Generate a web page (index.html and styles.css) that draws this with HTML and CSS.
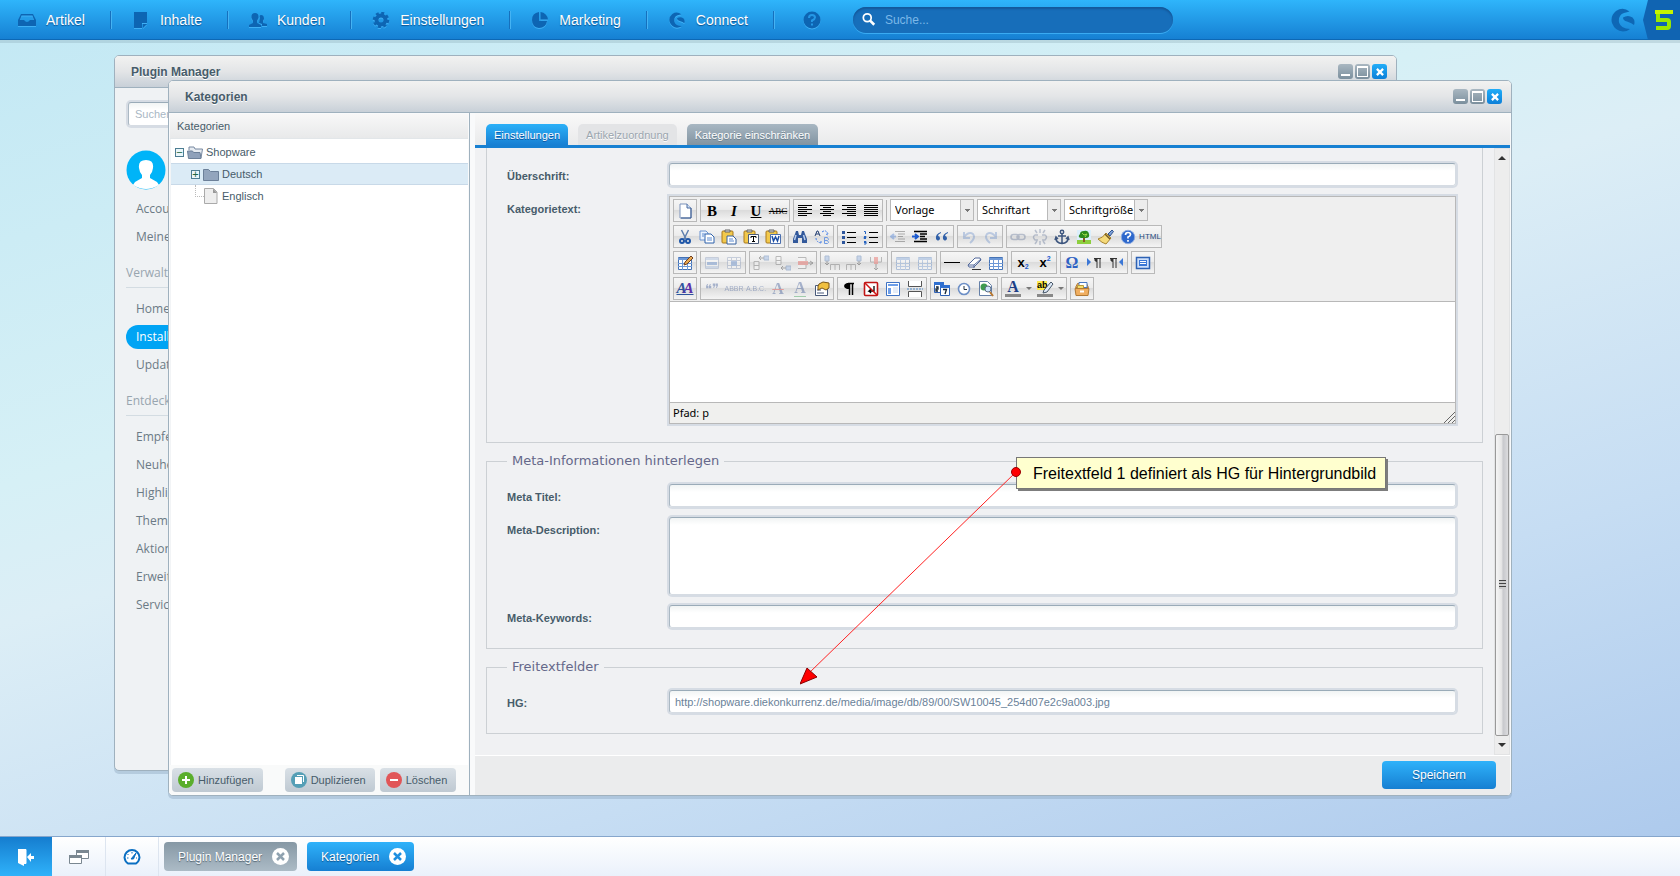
FILE: index.html
```html
<!DOCTYPE html>
<html lang="de">
<head>
<meta charset="utf-8">
<title>Kategorien</title>
<link rel="stylesheet" href="styles.css">
</head>
<body>
<svg class="sprite" aria-hidden="true">
  <symbol id="new" viewBox="0 0 16 16"><path d="M3 1h7l4 4v10H3z" fill="#fff" stroke="#7c93bb"/><path d="M10 1v4h4" fill="#cfe0f5" stroke="#4a6ba0"/><path d="M14 5v10H4" fill="none" stroke="#36598f"/></symbol>
  <symbol id="al" viewBox="0 0 16 16"><path d="M1 2.500h14M1 4.500h9M1 6.500h14M1 8.500h9M1 10.500h14M1 12.500h9" stroke="#000"/></symbol>
  <symbol id="ac" viewBox="0 0 16 16"><path d="M1 2.500h14M4 4.500h8M1 6.500h14M4 8.500h8M1 10.500h14M4 12.500h8" stroke="#000"/></symbol>
  <symbol id="ar" viewBox="0 0 16 16"><path d="M1 2.500h14M6 4.500h9M1 6.500h14M6 8.500h9M1 10.500h14M6 12.500h9" stroke="#000"/></symbol>
  <symbol id="aj" viewBox="0 0 16 16"><path d="M1 2.500h14M1 4.500h14M1 6.500h14M1 8.500h14M1 10.500h14M1 12.500h14" stroke="#000"/></symbol>
  <symbol id="cut" viewBox="0 0 16 16"><path d="M4.500 1L9 10M11.500 1L7 10" stroke="#5e7fae" stroke-width="1.500"/><circle cx="5" cy="12" r="2" fill="none" stroke="#1e56a8" stroke-width="2"/><circle cx="11" cy="12" r="2" fill="none" stroke="#1e56a8" stroke-width="2"/></symbol>
  <symbol id="copy" viewBox="0 0 16 16"><path d="M1 2h6l2 2v7H1z" fill="#eaf2fd" stroke="#6b93d0"/><path d="M6 5h6l3 3v6H6z" fill="#fff" stroke="#2f62ac"/><path d="M3 5h3M3 7h2M8 9h5M8 11h5" stroke="#5d8bd0"/></symbol>
  <symbol id="clip" viewBox="0 0 16 16"><rect x="1" y="2" width="11" height="12" rx="1" fill="#f2c94c" stroke="#a9791c"/><path d="M4 3V1h5v2z" fill="#ddd" stroke="#666"/></symbol>
  <symbol id="paste" viewBox="0 0 16 16"><use href="#clip"/><path d="M6 7h6l3 3v5H6z" fill="#fff" stroke="#35609f"/><path d="M8 10h4M8 12h5" stroke="#5d8bd0"/></symbol>
  <symbol id="pastet" viewBox="0 0 16 16"><use href="#clip"/><path d="M5.500 5.500h10v9h-10z" fill="#fff" stroke="#4b5c79"/><path d="M8 9V7.500h5V9M10.500 7.500v5M9 12.500h3" fill="none" stroke="#000"/></symbol>
  <symbol id="pastew" viewBox="0 0 16 16"><use href="#clip"/><path d="M5.500 5.500h10v9h-10z" fill="#fff" stroke="#4b6fae"/><path d="M7 7l1.500 5L10.500 8l2 4L14 7" fill="none" stroke="#1d4fa5" stroke-width="1.500"/></symbol>
  <symbol id="find" viewBox="0 0 16 16"><path d="M4 2h2l1 4h2l1-4h2l1 3 2 5v4h-5V9H6v5H1v-4l2-5z" fill="#33599b"/><path d="M4 6l-1.500 5M11.500 6l1.500 5" stroke="#b9cdec" stroke-width="1.500"/></symbol>
  <symbol id="repl" viewBox="0 0 16 16"><path d="M1 7l2-5h1l2 5M2 5h3" fill="none" stroke="#243f72"/><path d="M10.500 8.500v6h3l1-1-1-2 1-1-1-2zM11 11.500h2" fill="none" stroke="#6f9ae2"/><path d="M8 3q4-3 6 2M2 9q0 4 5 5M12 5l2 1M7 12v3" fill="none" stroke="#4a82e8" stroke-dasharray="2 1"/></symbol>
  <symbol id="ul" viewBox="0 0 16 16"><path d="M6 3.500h9M6 8.500h9M6 13.500h9" stroke="#000"/><path d="M1 2h3v3H1zM1 7h3v3H1zM1 12h3v3H1z" fill="#2c559c"/></symbol>
  <symbol id="ol" viewBox="0 0 16 16"><path d="M6 3.500h9M6 8.500h9M6 13.500h9" stroke="#000"/><path d="M1 2.500h1.500V5M1 7.500h2v1H1v1h2M1 12.500h2v2.500H1M1 13.500h2" fill="none" stroke="#2462c0"/></symbol>
  <symbol id="outd" viewBox="0 0 16 16"><path d="M5 2.500h10M8 5h7M8 7.500h5M8 10h7M5 12.500h10" stroke="#333"/><path d="M6 7.500H1M4 5L1 7.500 4 10" stroke="#2c6bd4" fill="none" stroke-width="2"/></symbol>
  <symbol id="ind" viewBox="0 0 16 16"><path d="M2 2.500h13M8 5h7M8 7.500h5M8 10h7M2 12.500h13" stroke="#000" stroke-width="1.500"/><path d="M0 7.500h5M3 5l3 2.500L3 10" stroke="#1c5bd0" fill="none" stroke-width="2"/></symbol>
  <symbol id="quo" viewBox="0 0 16 16"><path d="M7 3Q1 5 2 10q2 3 4 0 0-3-2-3 0-2 3-3zM14 3Q8 5 9 10q2 3 4 0 0-3-2-3 0-2 3-3z" fill="#2f5fa8"/></symbol>
  <symbol id="undo" viewBox="0 0 16 16"><path d="M3 3v6h6M3 8q5-6 9-3 3 4-3 9" fill="none" stroke="#5d86c8" stroke-width="2"/></symbol>
  <symbol id="redo" viewBox="0 0 16 16"><path d="M13 3v6H7M13 8Q8 2 4 5q-3 4 3 9" fill="none" stroke="#5d86c8" stroke-width="2"/></symbol>
  <symbol id="link" viewBox="0 0 16 16"><rect x="1" y="5.500" width="8" height="5" rx="2.500" fill="none" stroke="#54688f" stroke-width="1.500"/><rect x="7" y="5.500" width="8" height="5" rx="2.500" fill="none" stroke="#54688f" stroke-width="1.500"/></symbol>
  <symbol id="unlink" viewBox="0 0 16 16"><path d="M6 6H3q-3 2 0 5h3M10 6h3q3 2 0 5h-3M8 0v4M3 1l2 3M13 1l-2 3M8 16v-4M3 15l2-3M13 15l-2-3" fill="none" stroke="#54688f" stroke-width="1.500"/></symbol>
  <symbol id="anch" viewBox="0 0 16 16"><circle cx="8" cy="3" r="1.700" fill="none" stroke="#3d567f" stroke-width="1.500"/><path d="M8 5v9M4 7h8M2 9q0 5 6 5.500Q14 14 14 9M1 11l1-3 2 2M15 11l-1-3-2 2" fill="none" stroke="#3d567f" stroke-width="1.500"/></symbol>
  <symbol id="img" viewBox="0 0 16 16"><path d="M1 1h14v14H1z" fill="#dbeefb"/><path d="M1 11h14v4H1z" fill="#8dcf3f"/><path d="M7 8h2v5H7z" fill="#8a5a22"/><path d="M8 2q4-1 5 3 1 4-3 4H5Q1 8 4 5q0-3 4-3z" fill="#2d8b1f"/><path d="M6 4l2 2 3-1-2 3" stroke="#9fdb4c" fill="none"/></symbol>
  <symbol id="clean" viewBox="0 0 16 16"><path d="M10 5l4-4 1.500 1.500L12 7z" fill="#7da0d8" stroke="#31548f"/><path d="M8 4l5 5-5 6q-4-1-8-5 5-1 8-6z" fill="#f5da7a" stroke="#a8842f"/><path d="M7 5l5 5" stroke="#755a21" stroke-width="1.500"/></symbol>
  <symbol id="help" viewBox="0 0 16 16"><circle cx="8" cy="8" r="6.700" fill="#2e68cc" stroke="#8aa9e0"/><path d="M5.500 6q0-2.500 2.500-2.500t2.500 2Q10.500 7 8 8v1.500M8 11v1.800" fill="none" stroke="#fff" stroke-width="1.700"/></symbol>
  <symbol id="tbl" viewBox="0 0 16 16"><path d="M1.500 2.500h13v12h-13z" fill="#fff" stroke="#4572b4"/><path d="M1 3h14v2H1z" fill="#6c98d7"/><path d="M1 8.500h14M1 11.500h14M5.500 5v10M10.500 5v10" stroke="#6c98d7"/></symbol>
  <symbol id="tbled" viewBox="0 0 16 16"><use href="#tbl"/><path d="M7 10l1-3 6-6 2 2-6 6z" fill="#e8a850" stroke="#704020"/></symbol>
  <symbol id="trow" viewBox="0 0 16 16"><path d="M1.500 2.500h13v11h-13z" fill="#fff" stroke="#7b8fb4"/><path d="M2 4h12M2 12h12" stroke="#7b9fd4" stroke-width="1.500"/><path d="M3 7h10v3H3z" fill="#497dcc"/></symbol>
  <symbol id="tcell" viewBox="0 0 16 16"><path d="M1.500 2.500h13v11h-13zM5.500 2v12M10.500 2v12M1 5.500h14M1 10.500h14" fill="#fff" stroke="#7b8fb4"/><path d="M5 6h6v5H5z" fill="#497dcc"/></symbol>
  <symbol id="rbef" viewBox="0 0 16 16"><path d="M1 6.500h5v8H1zM1 10.500h5" fill="#fff" stroke="#555"/><path d="M11 1h5v4h-5z" fill="#7ea5df" stroke="#35609f"/><path d="M11 3H6l2-2M6 3l2 2" fill="none" stroke="#222"/></symbol>
  <symbol id="raft" viewBox="0 0 16 16"><path d="M1 1.500h5v8H1zM1 5.500h5" fill="#fff" stroke="#555"/><path d="M11 11h5v4h-5z" fill="#7ea5df" stroke="#35609f"/><path d="M11 13H6l2-2M6 13l2 2" fill="none" stroke="#222"/></symbol>
  <symbol id="rdel" viewBox="0 0 16 16"><path d="M1 2.500h8v11H1" fill="#fff" stroke="#555"/><path d="M1 6h10v4H1z" fill="#e8433a"/><path d="M11 8h5M13 6l3 2-3 2" fill="none" stroke="#222"/></symbol>
  <symbol id="cbef" viewBox="0 0 16 16"><path d="M6.500 15V9.500h9V15M11 9.500V15" fill="none" stroke="#555"/><path d="M1 1h4v5H1z" fill="#7ea5df" stroke="#35609f"/><path d="M3 6v4M1 8l2 2 2-2" fill="none" stroke="#222"/></symbol>
  <symbol id="caft" viewBox="0 0 16 16"><path d="M.500 15V9.500h9V15M5 9.500V15" fill="none" stroke="#555"/><path d="M11 1h4v5h-4z" fill="#7ea5df" stroke="#35609f"/><path d="M13 6v4M11 8l2 2 2-2" fill="none" stroke="#222"/></symbol>
  <symbol id="cdel" viewBox="0 0 16 16"><path d="M2.500 2v5h11V2" fill="none" stroke="#555"/><path d="M6 2h4v7H6z" fill="#e8433a"/><path d="M8 9v6M6 13l2 2 2-2" fill="none" stroke="#222"/></symbol>
  <symbol id="hr" viewBox="0 0 16 16"><path d="M0 7.500h16" stroke="#000"/></symbol>
  <symbol id="eras" viewBox="0 0 16 16"><path d="M2 10l7-7h5l1 2-7 7H3z" fill="#fff" stroke="#52699b"/><path d="M2 10h6l7-6M8 10v3" fill="none" stroke="#52699b"/><path d="M6 14.500h9" stroke="#333"/></symbol>
  <symbol id="ltr" viewBox="0 0 16 16"><path d="M1 3v8l4-4z" fill="#3b77d6"/><path d="M11 13V3M14 13V3M8 3.500h7" stroke="#333"/><path d="M11 3H9q-2 3 2 4z" fill="#333"/></symbol>
  <symbol id="rtl" viewBox="0 0 16 16"><path d="M15 3v8l-4-4z" fill="#3b77d6"/><path d="M5 13V3M8 13V3M2 3.500h7" stroke="#333"/><path d="M5 3H3Q1 6 5 7z" fill="#333"/></symbol>
  <symbol id="full" viewBox="0 0 16 16"><path d="M1.500 2.500h13v11h-13z" fill="#cfe1fb" stroke="#2d62b4" stroke-width="1.500"/><path d="M4 5h8v6H4z" fill="#3b77d6"/><path d="M5 6.500h6M5 8.500h6" stroke="#fff"/></symbol>
  <symbol id="props" viewBox="0 0 16 16"><path d="M1.500 4.500h12v10h-12z" fill="#fff" stroke="#48597a"/><path d="M3 9h4M3 12h7" stroke="#48597a"/><path d="M5 3l4-2 6 1v5l-3 2-4-2-4 2V5z" fill="#f0c040" stroke="#7a5718"/></symbol>
  <symbol id="pil" viewBox="0 0 16 16"><path d="M13 2.500H7M8.500 2v12M11.500 2v12" stroke="#000" stroke-width="1.500"/><path d="M9 2H6Q3 3 3 5t3 3h3z"/></symbol>
  <symbol id="nbr" viewBox="0 0 16 16"><rect x="1.500" y="1.500" width="13" height="13" rx="1" fill="#fff" stroke="#c01515" stroke-width="1.600"/><path d="M11 5v5H6l2-2M6 10l2 2" fill="none" stroke="#000" stroke-width="1.300"/><path d="M2 2l12 12" stroke="#d01515" stroke-width="1.500"/></symbol>
  <symbol id="tpl" viewBox="0 0 16 16"><path d="M1.500 1.500h13v13h-13z" fill="#fff" stroke="#3f73c4"/><path d="M3 3h10v2H3zM3 7h3v6H3z" fill="#6d9ee8"/><path d="M8 7h5M8 9h5M8 11h5" stroke="#c8d8f0"/></symbol>
  <symbol id="pb" viewBox="0 0 16 16"><path d="M1.500 0v5.500h13V0M1.500 16v-5.500h13V16" fill="#fff" stroke="#555"/><path d="M0 8h16" stroke="#4a87c8" stroke-dasharray="2 1"/></symbol>
  <symbol id="date" viewBox="0 0 16 16"><path d="M.500 1.500h9v10h-9z" fill="#fff" stroke="#2f61b4"/><path d="M0 1h10v3H0z" fill="#2f6fd0"/><path d="M6.500 4.500h9v10h-9z" fill="#fff" stroke="#2f61b4"/><path d="M6 4h10v3H6z" fill="#2f6fd0"/><path d="M2 6h2v2H2v2h2M9 8.500h3.500L11 13" fill="none" stroke="#123" stroke-width="1.300"/></symbol>
  <symbol id="time" viewBox="0 0 16 16"><circle cx="8" cy="8" r="5.500" fill="#fff" stroke="#6d8fc6" stroke-width="1.600"/><path d="M8 5v3.500h3" fill="none" stroke="#234"/></symbol>
  <symbol id="prev" viewBox="0 0 16 16"><path d="M1.500.500h8l4 4v10h-12z" fill="#fff" stroke="#6580a8"/><circle cx="6" cy="6" r="3.500" fill="#3e9a50"/><circle cx="10" cy="8" r="3" fill="#cfe5fa" stroke="#5c6e88"/><path d="M12 11l3 4" stroke="#b87830" stroke-width="2"/></symbol>
  <symbol id="box" viewBox="0 0 16 16"><path d="M1.500 6.500l2-4h9l2 4z" fill="#f3b768" stroke="#b37a34"/><path d="M5 1.500h8v5H5z" fill="#fff" stroke="#4a78c0"/><path d="M3.500 4.500h6v4h-6z" fill="#f7dd6c" stroke="#b59a3c"/><path d="M1 7.500h14l-1 7H2z" fill="#f0ae60" stroke="#b37a34"/><path d="M6 10.500h4" stroke="#fff" stroke-width="2"/></symbol>
  <symbol id="sw" viewBox="0 0 24 24"><path d="M18.500 3.500Q12-1.500 5 3-1 8 1 15q3 8 11 8.500 4 0 7-2.500Q10 21 8 14.500 7 7 13 5q3-1 5.500-1.500z"/><path d="M12 9.500q5-3 9.500 0 3 3 1.500 7.500-2-2-7-3.500-4-1-4-4z"/></symbol>
  <symbol id="folder" viewBox="0 0 16 13"><path d="M.500 12.500v-11h5l2 2h8v9z" fill="#93a5bd" stroke="#6c8099"/></symbol>
</svg>

<header class="topbar">
  <nav class="menu" aria-label="Hauptmenü">
    <button class="menu-item"><svg viewBox="0 0 18 16"><path d="M3 2h12l3 6v6H0V8zM3.500 3.500L2 8h4q3 4 6 0h4l-1.500-4.500z"/></svg>Artikel</button>
    <button class="menu-item"><svg viewBox="0 0 18 16"><path d="M2 0h13v11h-5v5H2zM11 12h4l-4 4z"/></svg>Inhalte</button>
    <button class="menu-item"><svg viewBox="0 0 18 16"><path d="M6 1q4 0 3.500 5L8 9v2l4 2v2H0v-2l4-2V9L2.500 6Q2 1 6 1z"/><path d="M12 3q3 0 3 4l-1 2v2l4 1v2h-5v-2l-3-1 1-5q-1-3 1-3z"/></svg>Kunden</button>
    <button class="menu-item"><svg viewBox="0 0 18 16"><circle cx="9" cy="8" r="4.500" fill="none" stroke="#0d65b3" stroke-width="4"/><circle cx="9" cy="8" r="7" fill="none" stroke="#0d65b3" stroke-width="2.500" stroke-dasharray="3 2.500"/></svg>Einstellungen</button>
    <button class="menu-item"><svg viewBox="0 0 18 16"><path d="M8 0v9h8Q15 16 8 16 1 15 1 8 1 1 8 0z"/><path d="M9.500 0Q16 1 17 7.500H9.500z"/></svg>Marketing</button>
    <button class="menu-item"><svg viewBox="0 0 24 24"><use href="#sw"/></svg>Connect</button>
    <button class="menu-item help" aria-label="Hilfe"><svg viewBox="0 0 18 18"><circle cx="9" cy="9" r="8.500"/><path d="M6 7q0-3 3-3t3 2.500Q12 8 9 9.500V11M9 12.500v2" fill="none" stroke="#2598e6" stroke-width="2"/></svg></button>
  </nav>
  <label class="search">
    <svg viewBox="0 0 16 16"><circle cx="6" cy="6" r="4.500" fill="none" stroke="#fff" stroke-width="2"/><path d="M9 9l5 5" stroke="#fff" stroke-width="3"/></svg>
    <input type="search" placeholder="Suche..." aria-label="Suche">
  </label>
  <div class="brand">
    <svg class="brand-sw" viewBox="0 0 24 24"><use href="#sw"/></svg>
    <svg class="brand-five" viewBox="0 0 37 40"><path d="M5 0h32v40H5L0 20z" fill="#1064b2"/><path d="M29 12H15v8h9q2 0 2 2v4q0 2-2 2H13" fill="none" stroke="#9be800" stroke-width="4"/><path d="M12 12h18" stroke="#c6f500" stroke-width="4"/></svg>
  </div>
</header>

<main class="desktop">
  <section class="window plugin" aria-label="Plugin Manager">
    <div class="titlebar"><h2>Plugin Manager</h2>
      <div class="tools"><button class="min" aria-label="Minimieren"></button><button class="max" aria-label="Maximieren"></button><button class="close" aria-label="Schließen"><svg viewBox="0 0 9 9"><path d="M1 1l7 7M8 1L1 8" stroke="#fff" stroke-width="2.500"/></svg></button></div>
    </div>
    <div class="plugin-side">
      <input class="plugin-search" placeholder="Suchen..." aria-label="Plugins suchen">
      <svg class="avatar" viewBox="0 0 40 40"><circle cx="20" cy="20" r="19.500" fill="#00b4f8"/><path d="M20 10q8 0 7 8l-1 4-2 3v3l7 4 2 3q-13 8-26 0l2-3 7-4v-3l-2-3-1-4q-1-8 7-8z" fill="#fff"/></svg>
      <ul><li><a href="#">Account</a></li><li><a href="#">Meine Einkäufe</a></li></ul>
      <h3>Verwaltung</h3>
      <ul><li><a href="#">Home</a></li><li class="on"><a href="#">Installiert</a></li><li><a href="#">Updates</a></li></ul>
      <h3>Entdecken</h3>
      <ul><li><a href="#">Empfehlungen</a></li><li><a href="#">Neuheiten</a></li><li><a href="#">Highlights</a></li><li><a href="#">Themes</a></li><li><a href="#">Aktionen</a></li><li><a href="#">Erweiterungen</a></li><li><a href="#">Services</a></li></ul>
    </div>
  </section>

  <section class="window categories" aria-label="Kategorien">
    <div class="titlebar"><h2>Kategorien</h2>
      <div class="tools"><button class="min" aria-label="Minimieren"></button><button class="max" aria-label="Maximieren"></button><button class="close" aria-label="Schließen"><svg viewBox="0 0 9 9"><path d="M1 1l7 7M8 1L1 8" stroke="#fff" stroke-width="2.500"/></svg></button></div>
    </div>
    <div class="split">
      <aside class="tree-panel">
        <h3>Kategorien</h3>
        <ul class="tree">
          <li class="lvl0"><button class="exp" aria-label="Zuklappen">−</button><svg class="fold" viewBox="0 0 16 13"><path d="M2 4V1h5l1 2h7.500L14 12" fill="#e6ebf1" stroke="#7688a0"/><path d="M1.500 12.500L.500 5h5l1 1.500h6.500l1 6z" fill="#8fa1ba" stroke="#6c8099"/></svg>Shopware</li>
          <li class="lvl1 sel"><button class="exp" aria-label="Aufklappen">+</button><svg class="fold" viewBox="0 0 16 13"><use href="#folder"/></svg>Deutsch</li>
          <li class="lvl1"><span class="elbow"></span><svg class="fold" viewBox="0 0 16 16"><path d="M1.500.500h9l3.500 3.500v11.500H1.500z" fill="#eee" stroke="#aaa"/><path d="M10 .500V5h4z" fill="#999"/></svg>Englisch</li>
        </ul>
        <div class="tree-actions">
          <button><svg viewBox="0 0 16 16"><circle cx="8" cy="8" r="8" fill="#5aae2c"/><path d="M8 4v8M4 8h8" stroke="#fff" stroke-width="2"/></svg>Hinzufügen</button>
          <button class="dup"><svg viewBox="0 0 16 16"><circle cx="8" cy="8" r="8" fill="#559fb6"/><path d="M6 3.500h6.500V10" fill="none" stroke="#fff"/><path d="M4 5h7v7H4z" fill="#fff"/></svg>Duplizieren</button>
          <button><svg viewBox="0 0 16 16"><circle cx="8" cy="8" r="8" fill="#e15658"/><path d="M4 8h8" stroke="#fff" stroke-width="2"/></svg>Löschen</button>
        </div>
      </aside>
      <form class="detail">
        <div class="tabs" role="tablist">
          <button type="button" role="tab" class="active">Einstellungen</button>
          <button type="button" role="tab" class="off">Artikelzuordnung</button>
          <button type="button" role="tab">Kategorie einschränken</button>
        </div>
        <div class="scroll">
          <div class="fields">
            <fieldset class="first">
              <div class="row"><label for="head">Überschrift:</label><input id="head"></div>
              <div class="row"><label for="txt">Kategorietext:</label>
                <div class="editor">
                  <div class="toolbar">
                    <div class="tr">
                      <div class="g"><button type="button"><svg><use href="#new"/></svg></button></div>
                      <div class="g serif"><button type="button"><b>B</b></button><button type="button"><b><i>I</i></b></button><button type="button"><b><u>U</u></b></button><button type="button"><s>ABC</s></button></div>
                      <div class="g"><button type="button"><svg><use href="#al"/></svg></button><button type="button"><svg><use href="#ac"/></svg></button><button type="button"><svg><use href="#ar"/></svg></button><button type="button"><svg><use href="#aj"/></svg></button></div>
                      <span class="sep"></span>
                      <select aria-label="Vorlage"><option>Vorlage</option></select>
                      <select aria-label="Schriftart"><option>Schriftart</option></select>
                      <select aria-label="Schriftgröße"><option>Schriftgröße</option></select>
                    </div>
                    <div class="tr">
                      <div class="g"><button type="button"><svg><use href="#cut"/></svg></button><button type="button"><svg><use href="#copy"/></svg></button><button type="button"><svg><use href="#paste"/></svg></button><button type="button"><svg><use href="#pastet"/></svg></button><button type="button"><svg><use href="#pastew"/></svg></button></div>
                      <div class="g"><button type="button"><svg><use href="#find"/></svg></button><button type="button"><svg><use href="#repl"/></svg></button></div>
                      <div class="g"><button type="button"><svg><use href="#ul"/></svg></button><button type="button"><svg><use href="#ol"/></svg></button></div>
                      <div class="g"><button type="button" class="dim"><svg><use href="#outd"/></svg></button><button type="button"><svg><use href="#ind"/></svg></button><button type="button"><svg><use href="#quo"/></svg></button></div>
                      <div class="g"><button type="button" class="dim"><svg><use href="#undo"/></svg></button><button type="button" class="dim"><svg><use href="#redo"/></svg></button></div>
                      <div class="g"><button type="button" class="dim"><svg><use href="#link"/></svg></button><button type="button" class="dim"><svg><use href="#unlink"/></svg></button><button type="button"><svg><use href="#anch"/></svg></button><button type="button"><svg><use href="#img"/></svg></button><button type="button"><svg><use href="#clean"/></svg></button><button type="button"><svg><use href="#help"/></svg></button><button type="button" class="html">HTML</button></div>
                    </div>
                    <div class="tr">
                      <div class="g"><button type="button"><svg><use href="#tbled"/></svg></button></div>
                      <div class="g"><button type="button" class="dim"><svg><use href="#trow"/></svg></button><button type="button" class="dim"><svg><use href="#tcell"/></svg></button></div>
                      <div class="g"><button type="button" class="dim"><svg><use href="#rbef"/></svg></button><button type="button" class="dim"><svg><use href="#raft"/></svg></button><button type="button" class="dim"><svg><use href="#rdel"/></svg></button></div>
                      <div class="g"><button type="button" class="dim"><svg><use href="#cbef"/></svg></button><button type="button" class="dim"><svg><use href="#caft"/></svg></button><button type="button" class="dim"><svg><use href="#cdel"/></svg></button></div>
                      <div class="g"><button type="button" class="dim"><svg><use href="#tbl"/></svg></button><button type="button" class="dim"><svg><use href="#tbl"/></svg></button></div>
                      <div class="g"><button type="button"><svg><use href="#hr"/></svg></button><button type="button"><svg><use href="#eras"/></svg></button><button type="button"><svg><use href="#tbl"/></svg></button></div>
                      <div class="g xs"><button type="button">x<sub>2</sub></button><button type="button">x<sup>2</sup></button></div>
                      <div class="g"><button type="button" class="omega">Ω</button><button type="button"><svg><use href="#ltr"/></svg></button><button type="button"><svg><use href="#rtl"/></svg></button></div>
                      <div class="g"><button type="button"><svg><use href="#full"/></svg></button></div>
                    </div>
                    <div class="tr">
                      <div class="g"><button type="button" class="aa"><i>A</i><i>A</i></button></div>
                      <div class="g"><button type="button" class="dim cite">❝❞</button><button type="button" class="dim abbr">ABBR</button><button type="button" class="dim abbr">A.B.C.</button><button type="button" class="dim del"><span>A</span></button><button type="button" class="dim ins"><span>A</span></button><button type="button"><svg><use href="#props"/></svg></button></div>
                      <div class="g"><button type="button"><svg><use href="#pil"/></svg></button><button type="button"><svg><use href="#nbr"/></svg></button><button type="button"><svg><use href="#tpl"/></svg></button><button type="button"><svg><use href="#pb"/></svg></button></div>
                      <div class="g"><button type="button"><svg><use href="#date"/></svg></button><button type="button"><svg><use href="#time"/></svg></button><button type="button"><svg><use href="#prev"/></svg></button></div>
                      <div class="g"><button type="button" class="color"><span>A</span></button><button type="button" class="arr" aria-label="Textfarbe wählen"></button><button type="button"><svg class="big" viewBox="0 0 18 18"><path d="M1 1h10v9H1z" fill="#fce94a"/><text x="1" y="8" class="tiny">ab</text><path d="M8 10l7-8 2 2-6 8-4 1z" fill="#dfe9f8" stroke="#456"/><path d="M1 14h16v3H1z" fill="#888"/></svg></button><button type="button" class="arr" aria-label="Hintergrundfarbe wählen"></button></div>
                      <div class="g"><button type="button"><svg><use href="#box"/></svg></button></div>
                    </div>
                  </div>
                  <textarea id="txt"></textarea>
                  <div class="status">Pfad: p<svg viewBox="0 0 12 12"><path d="M1 12L12 1M5 12l7-7M9 12l3-3" stroke="#666"/></svg></div>
                </div>
              </div>
            </fieldset>
            <fieldset>
              <legend>Meta-Informationen hinterlegen</legend>
              <div class="row"><label for="mt">Meta Titel:</label><input id="mt"></div>
              <div class="row"><label for="md">Meta-Description:</label><textarea id="md" class="area"></textarea></div>
              <div class="row"><label for="mk">Meta-Keywords:</label><input id="mk"></div>
            </fieldset>
            <fieldset>
              <legend>Freitextfelder</legend>
              <div class="row"><label for="hg">HG:</label><input id="hg" value="http://shopware.diekonkurrenz.de/media/image/db/89/00/SW10045_254d07e2c9a003.jpg"></div>
            </fieldset>
          </div>
          <div class="scrollbar"><i class="up"></i><div class="thumb"><span></span></div><i class="down"></i></div>
        </div>
        <div class="footer"><button type="button">Speichern</button></div>
      </form>
    </div>
  </section>

  <svg class="pointer" viewBox="0 0 226 222"><path d="M216 8L8 210" stroke="#f22"/><path d="M0 220l7-16 10 9z" fill="red" stroke="#800"/></svg>
  <p class="note">Freitextfeld 1 definiert als HG für Hintergrundbild</p>
  <i class="dot"></i>
</main>

<footer class="taskbar">
  <button class="start" aria-label="Abmelden"><svg viewBox="0 0 18 18"><path d="M1 1h8v15H7v2L1 15z" fill="#fff"/><path d="M9 1.500v14" stroke="#fff"/><path d="M10 9l4-4v3h3v3h-3v3z" fill="#fff"/></svg></button>
  <button class="quick" aria-label="Fenster"><svg class="wins" viewBox="0 0 20 16"><path d="M7.500 1.500h12v8h-12z" fill="#fff" stroke="#7a8791"/><path d="M7 1h13v3H7z" fill="#7a8791"/><path d="M.500 6.500h12v8H.500z" fill="#fff" stroke="#7a8791"/><path d="M0 6h13v3H0z" fill="#7a8791"/></svg></button>
  <button class="quick" aria-label="Performance"><svg viewBox="0 0 18 18"><path d="M5 15.500h8q3-2 3.500-6A7.500 7.500 0 0 0 1.500 9.500q.500 4 3.500 6z" fill="#fff" stroke="#0a6fc2" stroke-width="2"/><path d="M8 11l5-6-2.500 6z" fill="#0a6fc2" stroke="#0a6fc2"/><path d="M9 4v1.500M4.500 6l1 1M4 10h1.500M14 10h-1" stroke="#0a6fc2"/></svg></button>
  <button class="task">Plugin Manager<svg viewBox="0 0 17 17"><circle cx="8.500" cy="8.500" r="8.500" fill="#fff"/><path d="M5 5l7 7M12 5l-7 7" stroke="#8fa2b0" stroke-width="2.500"/></svg></button>
  <button class="task active">Kategorien<svg viewBox="0 0 17 17"><circle cx="8.500" cy="8.500" r="8.500" fill="#fff"/><path d="M5 5l7 7M12 5l-7 7" stroke="#1e8fe0" stroke-width="2.500"/></svg></button>
</footer>
</body>
</html>
```
FILE: styles.css
```css
* { box-sizing: border-box; }
body { margin: 0; height: 100vh; display: flex; flex-direction: column; overflow: hidden;
  font: 11px/16px "Liberation Sans", Arial, sans-serif; color: #475c6a;
  background: linear-gradient(163deg, #c2e8f4 0%, #d6f0f6 35%, #dceef6 45%, #c6ddf3 72%, #abc8ec 100%); }
button, input, textarea, select { font: inherit; color: inherit; margin: 0; padding: 0; border: 0; background: none; border-radius: 0; outline: 0; }
h2, h3, ul, p { margin: 0; padding: 0; font-size: inherit; font-weight: normal; list-style: none; }
a { color: inherit; text-decoration: none; }
svg { display: block; flex: none; }
.sprite { position: absolute; width: 0; height: 0; }
.tiny { font: bold 9px "Liberation Sans", sans-serif; }

.topbar { height: 40px; flex: none; display: flex; align-items: center; border-bottom: 1px solid #0d68b5; position: relative;
  background: linear-gradient(#2fb5fb, #1680d3); box-shadow: 0 3px 0 rgba(120, 150, 165, .25); }
.menu { display: flex; }
.menu-item { display: flex; align-items: center; gap: 10px; height: 18px; padding: 0 26px 0 20px; font-size: 14px; color: #fff;
  text-shadow: 0 1px 1px #0b5390; border-left: 1px solid #45b3f3; box-shadow: -1px 0 0 #1670bd; }
.menu-item:first-child { border: 0; padding-left: 18px; box-shadow: none; }
.menu-item svg { width: 18px; height: 16px; fill: #0d65b3; filter: drop-shadow(0 1px 0 #3fb0f5); }
.menu-item.help { padding: 0 32px 0 28px; }
.help svg { height: 18px; }
.search { display: flex; align-items: center; gap: 9px; width: 320px; height: 26px; padding: 0 9px; border-radius: 13px;
  background: #176eba; box-shadow: inset 0 2px 2px #14589a, 0 1px 0 #3aabf2; }
.search svg { width: 14px; height: 15px; }
.search input { flex: 1; min-width: 0; font-size: 12px; appearance: none; }
.search input::placeholder { color: #7bb8e8; opacity: 1; }
.brand { margin-left: auto; display: flex; align-items: center; gap: 8px; }
.brand-sw { width: 24px; height: 24px; fill: #0e67b5; }
.brand-five { width: 37px; height: 40px; }

.desktop { position: relative; flex: 1; min-height: 0; }
.window { position: absolute; display: flex; flex-direction: column; overflow: hidden; border: 1px solid #9fb1be; border-radius: 5px;
  background: #eff2f4; box-shadow: 0 3px 0 rgba(130, 155, 180, .35); }
.plugin { top: 15px; right: 283px; bottom: 65px; left: 114px; }
.categories { top: 40px; right: 168px; bottom: 40px; left: 168px; background: #f9fafb; }
.titlebar { height: 32px; flex: none; display: flex; align-items: center; justify-content: space-between; padding: 0 9px 0 16px;
  border-bottom: 1px solid #9fb1be; background: linear-gradient(#f2f2f1, #e3e5e7 50%, #c8d0d8); }
.titlebar h2 { font-size: 12px; font-weight: bold; text-shadow: 0 1px 0 #fff; }
.tools { display: flex; gap: 2px; }
.tools button { display: flex; align-items: center; justify-content: center; width: 15px; height: 15px; border-radius: 3px; background: linear-gradient(#a9b7c1, #7b8f9d); }
.tools .min::before { content: ""; width: 9px; height: 2px; background: #fff; margin-top: 7px; }
.tools .max::before { content: ""; width: 9px; height: 8px; border: 1px solid #fff; border-top-width: 2px; }
.tools .close { background: linear-gradient(#22adf8, #0c7fd8); }
.close svg { width: 8px; height: 8px; }

.plugin-side { width: 240px; padding: 12px 11px 0; font: 12px/28px "Open Sans", "Noto Sans", sans-serif; color: #6b7a85; }
.plugin-side li { padding-left: 10px; height: 28px; }
.plugin-side li.on { color: #fff; background: #00a4f4; border-radius: 12px; height: 24px; line-height: 24px; margin: 2px 0; }
.plugin-side h3 { color: #98a5af; border-bottom: 1px solid #d3dce2; height: 29px; margin: 8px 0 7px; }
.avatar { width: 40px; height: 40px; margin: 24px 0 5px; }

.row input, .row .area, .plugin-search { flex: 1; min-width: 0; height: 23px; margin: 2px; padding: 0 5px; border: 1px solid #d6dce3;
  border-top-color: #9aabb8; border-left-color: #aab8c3; border-radius: 3px; background: linear-gradient(#f1f4f4, #fff 7px);
  box-shadow: 0 0 0 2px #d6dce4; color: #6a8299; resize: none; }
.plugin-search { display: block; width: 210px; height: 24px; font: 11px "Liberation Sans", sans-serif; padding-left: 6px; }
.plugin-search::placeholder { color: #a9b7c4; opacity: 1; }

.split { flex: 1; min-height: 0; display: flex; gap: 5px; padding: 0 1px 0 0; }
.tree-panel { width: 301px; flex: none; display: flex; flex-direction: column; border-right: 1px solid #9fb1be; }
.tree-panel h3 { height: 25px; margin: 1px 1px 0 1px; padding-left: 7px; line-height: 24px; border-bottom: 1px solid #e2e6e9; background: linear-gradient(#f8f8f8, #e8e9ea); }
.tree { flex: 1; margin: 0 1px 0 1px; padding-top: 2px; background: #fff; border-left: 1px solid #f2f4f6; }
.tree li { display: flex; align-items: center; height: 22px; gap: 3px; padding-left: 4px; }
.tree .lvl1 { padding-left: 20px; }
.tree .sel { background: #dbebf6; border: solid #c8d9e8; border-width: 1px 0; }
.exp { width: 9px; height: 9px; border: 1px solid #4d7d92; background: #eaf6fa; font-size: 11px; line-height: 7px; color: #264; }
.elbow { width: 9px; height: 12px; margin-bottom: 10px; border: dotted #bbb; border-width: 0 0 1px 1px; margin-left: 4px; margin-right: -4px; }
.fold { width: 16px; height: 13px; }
.elbow + .fold { height: 16px; }
.tree-actions { flex: none; display: flex; gap: 5px; padding: 3px; background: #f9fafa; }
.tree-actions button { display: flex; align-items: center; gap: 4px; height: 24px; padding: 0 9px 0 6px; border-radius: 4px; background: linear-gradient(#d9e0e6, #bfc9d2); }
.tree-actions .dup { margin-left: 17px; }
.tree-actions svg { width: 16px; height: 16px; }

.detail { flex: 1; min-width: 0; display: flex; flex-direction: column; background: #f0f1f3; }
.tabs { height: 35px; flex: none; display: flex; align-items: flex-end; gap: 10px; padding-left: 11px; border-bottom: 3px solid #1780d2; background: linear-gradient(#f9f9f9, #e9eaeb); }
.tabs button { height: 21px; padding: 0 8px; border-radius: 5px 5px 0 0; color: #fff; background: linear-gradient(#a8b7c2, #8294a2); text-shadow: 0 1px 0 #6b7f8d; }
.tabs .active { background: linear-gradient(#2bb0f8, #1880d3); text-shadow: 0 1px 0 #0b55a0; }
.tabs .off { background: #e3e4e6; color: #9aa5ae; text-shadow: 0 1px 0 #fff; }
.scroll { flex: 1; min-height: 0; display: flex; border-bottom: 1px solid #fff; }
.fields { flex: 1; min-width: 0; padding: 0 11px; overflow: hidden; }
fieldset { margin: 10px 0 0; padding: 13px 24px 18px 20px; border: 1px solid #ccd0d4; min-width: 0; }
fieldset.first { margin: 0; padding-bottom: 16px; border-top: 0; }
legend { height: 16px; margin: 0; padding: 0 5px; font: 13px/16px "DejaVu Sans", sans-serif; color: #65688a; }
.row { display: flex; }
.row + .row { margin-top: 6px; }
.row label { width: 160px; flex: none; font-weight: bold; padding-top: 7px; }
.row .area { height: 78px; }

.editor { flex: 1; min-width: 0; margin: 2px; border: 1px solid #b8b8b8; box-shadow: 0 0 0 2px #d6dce4; background: #f0f0ee; color: #000; }
.toolbar { display: grid; gap: 3px; padding: 2px 3px 1px 2px; border-bottom: 1px solid #b8b8b8; background: #efefef; }
.tr { display: flex; gap: 3px; height: 23px; padding-left: 1px; }
.g { display: flex; height: 23px; border: 1px solid #b9b9b9; background: linear-gradient(#f6f6f6, #ececec 45%, #dcdcdc 50%, #f4f4f4); }
.g button { width: 22px; height: 21px; display: flex; align-items: center; justify-content: center; }
.g svg { width: 16px; height: 16px; }
.g svg.big { width: 18px; height: 18px; }
.g .dim { opacity: .35; }
.serif button { font: 15px/20px "Liberation Serif", serif; }
.serif button:last-child { font-size: 9px; }
.g .html { font: 8px "Liberation Sans", sans-serif; color: #244a80; }
.xs button { font: bold 13px/16px "Liberation Sans", sans-serif; }
.xs sub, .xs sup { font-size: 7px; line-height: 7px; color: #1c5bd0; }
.xs sub { align-self: flex-end; margin-bottom: 3px; }
.xs sup { align-self: flex-start; margin-top: 3px; }
.g .omega { font: bold 16px "Liberation Serif", serif; color: #2f62c4; }
.g .aa { font: bold 15px/17px "Liberation Serif", serif; color: #2f559c; text-decoration: underline; }
.aa i + i { color: #5b30a8; margin-left: -3px; }
.g .cite { font-size: 13px; color: #1d3f88; }
.g .abbr { font-size: 7px; color: #1d3f88; }
.g .del, .g .ins, .g .color { font: bold 16px/16px "Liberation Serif", serif; color: #1d3f88; }
.del span { text-decoration: line-through #e02020; }
.ins span { border-bottom: 1px solid #109030; }
.color span { border-bottom: 3px solid #888; line-height: 14px; padding: 0 2px; }
.g .arr { width: 10px; }
.arr::before { content: ""; border: 3px solid transparent; border-top-color: #777; border-bottom: 0; }
.sep { width: 1px; margin: 1px 0; background: #b5b5b5; }
.tr select { appearance: none; width: 84px; height: 22px; padding-left: 4px; font: 11px/20px "Noto Sans", sans-serif; border: 1px solid #b9b9b9;
  background: linear-gradient(#777, #777) 74px 9px / 5px 1px no-repeat, linear-gradient(#777, #777) 75px 10px / 3px 1px no-repeat, linear-gradient(#777, #777) 76px 11px / 1px 1px no-repeat, linear-gradient(90deg, #fff 69px, #b9b9b9 69px, #b9b9b9 70px, #ececec 70px); }
.editor textarea { display: block; width: 100%; height: 100px; background: #fff; resize: none; }
.status { display: flex; justify-content: space-between; align-items: flex-end; height: 21px; padding-left: 3px; border-top: 1px solid #b8b8b8; font: 11px/20px "Noto Sans", sans-serif; }
.status svg { width: 12px; height: 12px; }

.scrollbar { width: 16px; flex: none; display: flex; flex-direction: column; align-items: center; border: 1px solid #e2e3e4; background: #ededed; }
.scrollbar i { height: 18px; display: flex; align-items: center; }
.scrollbar i::before { content: ""; border: 4px solid transparent; border-top: 0; border-bottom-color: #333; }
.scrollbar .down::before { border-top: 4px solid #333; border-bottom: 0; }
.thumb { width: 100%; height: 50%; margin-top: auto; display: flex; align-items: center; justify-content: center; border: 1px solid #999; border-radius: 2px; background: linear-gradient(90deg, #f5f5f5, #e6e6e6 45%, #c8c9cd 60%, #dcdcde); }
.thumb span { width: 7px; height: 9px; background: repeating-linear-gradient(#444 0 1px, #ccc 1px 3px); }
.footer { flex: none; display: flex; justify-content: flex-end; padding: 5px 14px 6px; background: #ebeced; }
.footer button { width: 114px; height: 28px; border-radius: 4px; color: #fff; font-size: 12px; text-shadow: 0 1px 1px #0b5390; background: linear-gradient(#2fb2fa, #167fd2); }

.note { position: absolute; left: 1016px; top: 417px; padding: 6px 9px 5px 16px; border: 1px solid #777; background: #ffffcf; color: #000; font-size: 16px; line-height: 19px; box-shadow: 2px 2px 0 #7d7d7d; }
.pointer { position: absolute; left: 800px; top: 424px; width: 226px; height: 222px; }
.dot { position: absolute; left: 1011px; top: 427px; width: 10px; height: 10px; border: 1px solid #900; border-radius: 5px; background: red; }

.taskbar { height: 40px; flex: none; display: flex; align-items: center; border-top: 1px solid #86a6cc; background: linear-gradient(#fff, #eaf1fb); }
.taskbar button { display: flex; align-items: center; justify-content: center; }
.start { width: 52px; height: 39px; margin-right: 1px; background: linear-gradient(#157dcf, #2fb2fa); }
.quick { width: 53px; height: 39px; border-right: 1px solid #dde5f0; }
.taskbar .start svg, .quick svg { width: 18px; height: 18px; }
.taskbar .quick .wins { width: 20px; height: 16px; }
.taskbar .task { height: 29px; margin-left: 5px; padding: 0 8px 0 14px; gap: 10px; border-radius: 4px; color: #fff; font-size: 12px; text-shadow: 0 1px 1px #4d5e6b; background: linear-gradient(#8698a5, #acbbc6); }
.taskbar .task + .task { margin-left: 10px; }
.taskbar .task.active { background: linear-gradient(#2fb2fa, #167fd2); text-shadow: 0 1px 1px #0b5390; }
.task svg { width: 17px; height: 17px; }
```
